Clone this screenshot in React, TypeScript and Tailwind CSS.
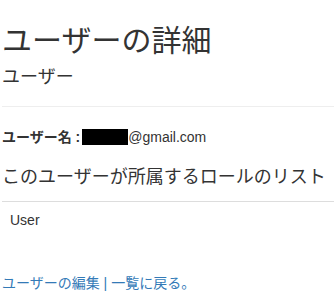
export default function App() {
  return (
    <div className="flex min-h-[298px] w-[336px] flex-col bg-white px-0.5 text-[14px] leading-[20px] text-[#333] [font-family:'Liberation_Sans','Noto_Sans_CJK_JP',sans-serif]">
      <h2 className="mt-[24px] text-[30px] leading-[33px]">ユーザーの詳細</h2>
      <h4 className="mt-[10px] text-[18px] leading-[20px]">ユーザー</h4>
      <hr className="mt-[19px] border-t border-[#eee]" />
      <div className="mt-[20px] flex items-center">
        <span className="font-bold">ユーザー名 :</span>
        <span className="ml-[2px] inline-block h-[16px] w-[46px] bg-black" />
        <span>@gmail.com</span>
      </div>
      <h4 className="mt-[20px] text-[18px] leading-[20px]">このユーザーが所属するロールのリスト</h4>
      <div className="mt-[14px] border-t border-[#ddd] px-2 py-2">User</div>
      <div className="mt-[35px] text-[#337ab7]">
        <a href="#">ユーザーの編集</a> | <a href="#">一覧に戻る。</a>
      </div>
    </div>
  )
}
